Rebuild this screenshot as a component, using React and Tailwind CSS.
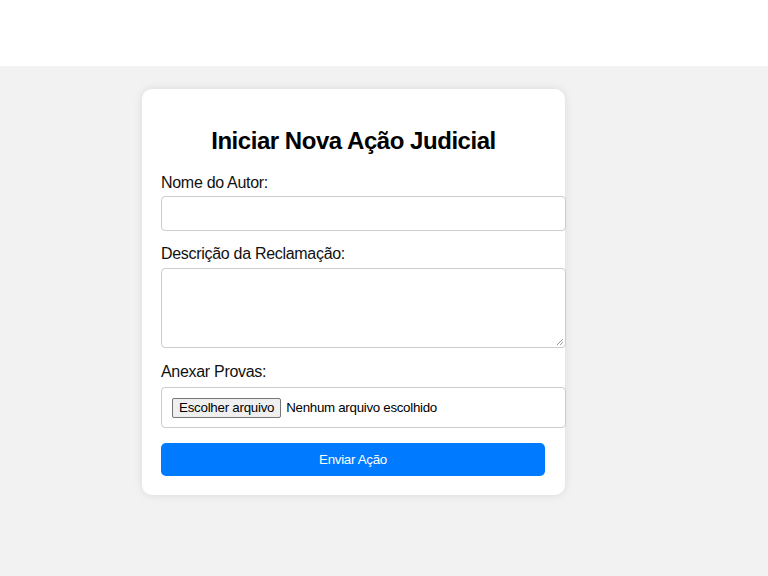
export default function App() {
  const font = { fontFamily: '"Liberation Sans", Arial, sans-serif' };
  return (
    <div className="w-full min-h-[576px] bg-[#f2f2f2]" style={font}>
      <div className="h-[66px] bg-white" />
      <div className="pt-[23px]">
        <div className="ml-[142px] w-[423px] bg-white rounded-[10px] shadow-[0_0_10px_rgba(0,0,0,0.1)] px-[19px] pt-[20px] pb-[19px]">
          <h2 className="mt-[18px] mb-[19px] text-center text-[24px] leading-[28px] font-bold text-black tracking-[-0.46px]">
            Iniciar Nova Ação Judicial
          </h2>
          <label className="block text-[16px] leading-[18px] text-[#111] mb-[4px] tracking-[-0.3px]">Nome do Autor:</label>
          <div className="w-[405px] h-[35px] border border-[#cccccc] rounded-[4px] bg-white mb-[14px]" />
          <label className="block text-[16px] leading-[18px] text-[#111] mb-[5px] tracking-[-0.3px]">Descrição da Reclamação:</label>
          <div className="relative w-[405px] h-[80px] border border-[#cccccc] rounded-[4px] bg-white mb-[15px]">
            <svg className="absolute right-[1px] bottom-[1px]" width="9" height="9" viewBox="0 0 9 9">
              <path d="M8 2 L2 8 M8 5 L5 8" stroke="#9a9a9a" strokeWidth="1" fill="none" />
            </svg>
          </div>
          <label className="block text-[16px] leading-[18px] text-[#111] mb-[6px] tracking-[-0.3px]">Anexar Provas:</label>
          <div className="w-[405px] h-[41px] border border-[#cccccc] rounded-[4px] bg-white mb-[15px] flex items-center pl-[10px]">
            <span className="h-[20px] px-[6px] flex items-center text-[13.33px] text-black bg-[#efefef] border border-[#767676] rounded-[2px] tracking-[-0.25px]">
              Escolher arquivo
            </span>
            <span className="ml-[5px] text-[13.33px] text-black tracking-[-0.3px]">Nenhum arquivo escolhido</span>
          </div>
          <div className="w-[384px] h-[33px] rounded-[5px] bg-[#007bff] flex items-center justify-center text-white text-[13.33px] tracking-[-0.3px]">
            Enviar Ação
          </div>
        </div>
      </div>
    </div>
  );
}
